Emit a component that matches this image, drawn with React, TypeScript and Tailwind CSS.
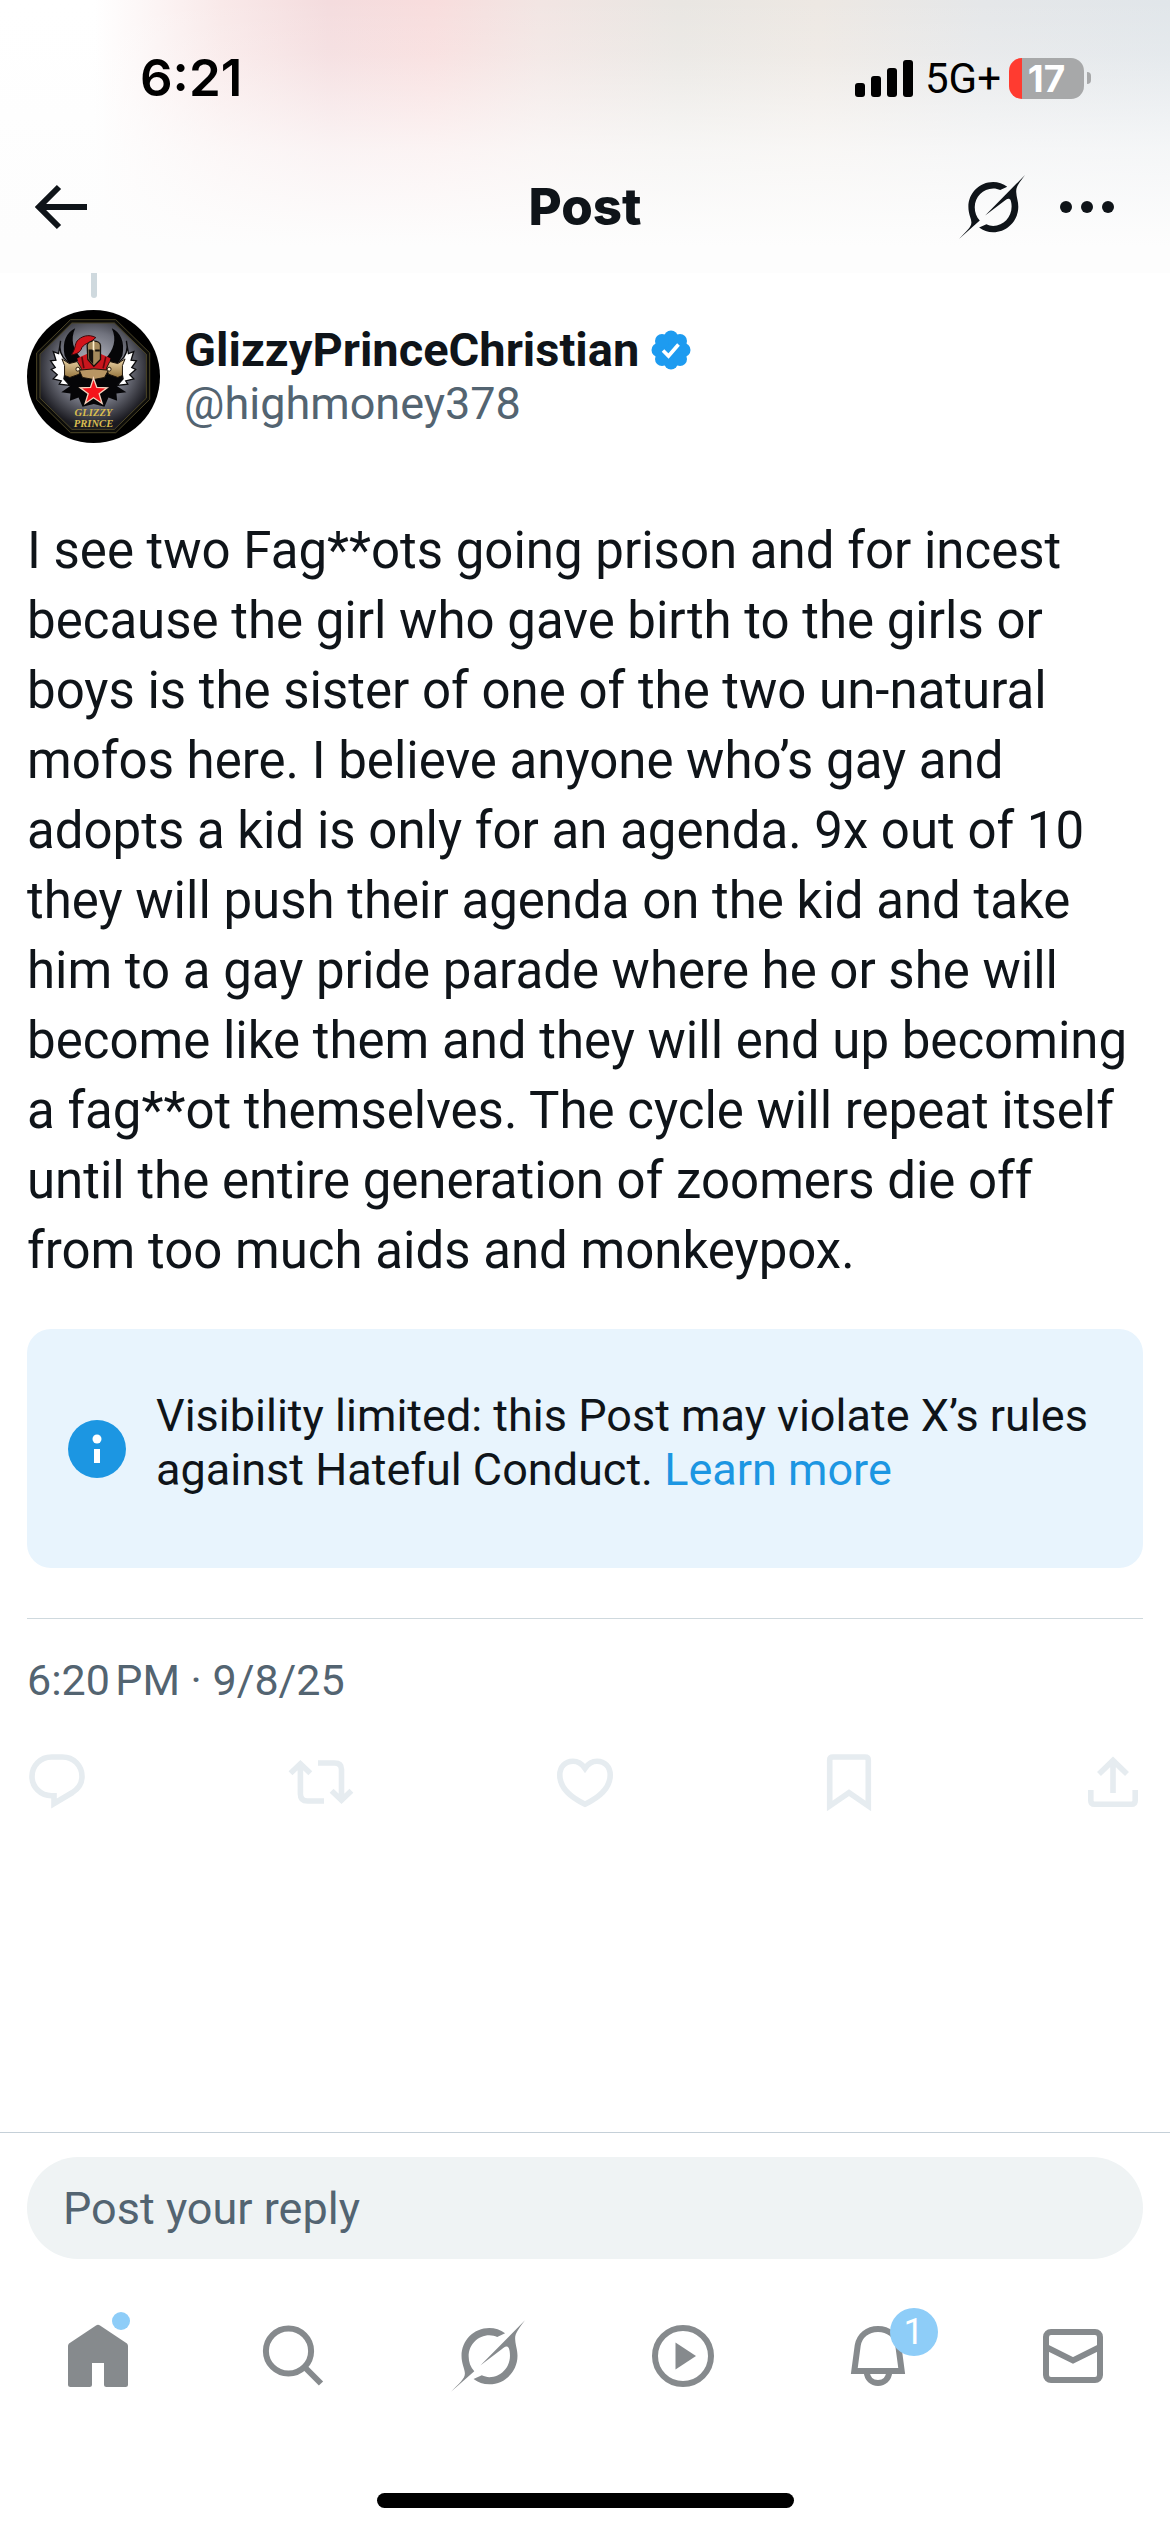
/**
 * Post detail page: status bar, header, post, limited visibility notice, reply bar and tabs
 */

type IconProps = { className?: string };

const postLines = [
  "I see two Fag**ots going prison and for incest",
  "because the girl who gave birth to the girls or",
  "boys is the sister of one of the two un-natural",
  "mofos here. I believe anyone who’s gay and",
  "adopts a kid is only for an agenda. 9x out of 10",
  "they will push their agenda on the kid and take",
  "him to a gay pride parade where he or she will",
  "become like them and they will end up becoming",
  "a fag**ot themselves. The cycle will repeat itself",
  "until the entire generation of zoomers die off",
  "from too much aids and monkeypox.",
];

function SignalIcon({ className }: IconProps) {
  return (
    <svg viewBox="0 0 58 37" className={className} fill="currentColor">
      <rect x="0" y="23" width="10" height="14" rx="3" />
      <rect x="16" y="16" width="10" height="21" rx="3" />
      <rect x="32" y="8" width="10" height="29" rx="3" />
      <rect x="48" y="0" width="10" height="37" rx="3" />
    </svg>
  );
}

function GrokIcon({ className }: IconProps) {
  return (
    <svg viewBox="414 436 197 191" className={className} fill="currentColor">
      <path d="M558 471C546 462 531 457 516 457C475 457 442 490 442 531C442 553 451 566 451 578C451 592 436 604 414 627L476 572C466 561 461 548 461 532C461 501 486 476 516 476C524 476 531 478 537 481Z" />
      <path d="M611 436C592 462 583 472 585 489C586 505 591 514 591 531C591 573 557 607 516 607C500 607 486 602 474 593L496 583C503 586 509 588 516 588C547 588 571 562 571 531C571 523 570 516 568 511C566 506 560 505 555 509L492 557Z" />
    </svg>
  );
}

function VerifiedIcon({ className }: IconProps) {
  return (
    <svg viewBox="0 0 40 40" className={className}>
      <g fill="#1d9bf0">
        <circle cx="20" cy="20" r="15" />
        <circle cx="20" cy="7.500" r="7" />
        <circle cx="20" cy="32.500" r="7" />
        <circle cx="7.500" cy="20" r="7" />
        <circle cx="32.500" cy="20" r="7" />
        <circle cx="11" cy="11" r="7" />
        <circle cx="29" cy="11" r="7" />
        <circle cx="11" cy="29" r="7" />
        <circle cx="29" cy="29" r="7" />
      </g>
      <path d="M12 20.500L17.500 26L27.500 14.500" fill="none" stroke="#fff" strokeWidth="3.600" />
    </svg>
  );
}

function Avatar({ className }: IconProps) {
  return (
    <svg viewBox="21 29 400 400" className={className} role="img" aria-label="Profile picture">
      <defs>
        <radialGradient id="shine" cx="50%" cy="42%" r="56%">
          <stop offset="0%" stopColor="#c4c6d0" />
          <stop offset="60%" stopColor="#70727d" />
          <stop offset="100%" stopColor="#1a1a20" />
        </radialGradient>
        <linearGradient id="gold" x1="0" y1="0" x2="0" y2="1">
          <stop offset="0%" stopColor="#ecd6a9" />
          <stop offset="100%" stopColor="#97763f" />
        </linearGradient>
      </defs>
      <circle cx="221" cy="229" r="200" fill="#000" />
      <path d="M152 58H288L390 158V298L288 398H152L50 298V158Z" fill="#0c0c0a" stroke="#4c4526" strokeWidth="3" />
      <path d="M156 68H284L380 162V294L284 388H156L60 294V162Z" fill="url(#shine)" stroke="#4c4526" strokeWidth="3" />
      {/* dark horns behind the helmet */}
      <path d="M166 84C140 96 126 124 134 166L150 196L186 176C160 150 150 118 166 84Z" fill="#050507" />
      <path d="M276 84C302 96 316 124 308 166L292 196L256 176C282 150 292 118 276 84Z" fill="#050507" />
      {/* dark lower feathers */}
      <path d="M140 200L128 246L150 258L124 276L152 280L150 302L176 292L188 320L222 312L254 320L266 292L292 302L290 280L320 276L292 258L314 246L302 200Z" fill="#050507" />
      {/* white feathers */}
      <g fill="#fff" stroke="#0a0a0c" strokeWidth="4">
        <path d="M122 122C116 148 122 168 142 184L132 236L150 256L118 252L124 242L100 236L112 224L94 208L106 202L92 182L108 180L100 154L116 160Z" />
        <path d="M320 122C326 148 320 168 300 184L310 236L292 256L324 252L318 242L342 236L330 224L348 208L336 202L350 182L334 180L342 154L326 160Z" />
      </g>
      {/* cape and shoulders */}
      <path d="M172 174L204 160H240L272 174L264 208L222 216L180 208Z" fill="#c9161d" />
      <path d="M186 170L192 204M258 170L250 204" stroke="#5e070b" strokeWidth="5" />
      <path d="M134 196L126 176L148 190L172 184L184 204L178 222L150 232L134 226Z" fill="url(#gold)" stroke="#1c130a" strokeWidth="3" />
      <path d="M308 196L316 176L294 190L270 184L260 204L266 222L294 232L308 226Z" fill="url(#gold)" stroke="#1c130a" strokeWidth="3" />
      <path d="M178 210L222 206L266 210L254 232L222 238L188 232Z" fill="#b89563" stroke="#1c130a" strokeWidth="3" />
      <circle cx="174" cy="207" r="6" fill="#fff4d8" stroke="#2b1c0d" strokeWidth="3" />
      <circle cx="268" cy="207" r="6" fill="#fff4d8" stroke="#2b1c0d" strokeWidth="3" />
      {/* plume and helmet */}
      <path d="M228 112C206 100 184 108 172 122C164 132 168 146 154 164C170 162 182 156 186 142C196 128 210 128 216 122Z" fill="#d3151b" stroke="#3a0507" strokeWidth="3" />
      <path d="M202 136C202 118 242 118 242 136V178L222 198L204 178Z" fill="#a58a5c" stroke="#15100a" strokeWidth="4" />
      <path d="M206 148H220V192L208 178ZM226 148H240V154H226Z" fill="#14100c" />
      <path d="M221 122V150" stroke="#fff0cb" strokeWidth="5" />
      {/* star */}
      <path d="M221 234L231 262L262 263L238 281L247 310L221 293L196 310L205 281L181 263L212 262Z" fill="#f5141b" stroke="#f6d3bd" strokeWidth="4" />
      <text x="221" y="348" textAnchor="middle" className="fill-[#d9bd4f] font-['Liberation_Serif'] text-[32px] font-bold italic">
        GLIZZY
      </text>
      <text x="221" y="382" textAnchor="middle" className="fill-[#d9bd4f] font-['Liberation_Serif'] text-[32px] font-bold italic">
        PRINCE
      </text>
    </svg>
  );
}

function ReplyIcon() {
  return <path d="M24.500 6H35.500C46.500 6 55 14.500 55 25.500C55 33 51 38 45.500 41.500L27 52.500V44.700H24.500C13.500 44.700 5 36 5 25.500C5 14.500 13.500 6 24.500 6Z" />;
}

function RepostIcon() {
  return <path d="M-.500 22.300L9.400 12.800L19.300 22.300M9.400 13V43Q9.400 50 16.500 50H33M27 12H43.500Q50.500 12 50.500 18.500V49M40.600 39.700L50.500 49.200L60.400 39.700" />;
}

function LikeIcon() {
  return <path d="M30 17.300C27 13 23 10.300 18 10.300C10 10.300 4.800 16 4.800 24C4.800 35 14 45.500 30 53.200C46 45.500 55.200 35 55.200 24C55.200 16 50 10.300 42 10.300C37 10.300 33 13 30 17.300Z" />;
}

function BookmarkIcon() {
  return <path d="M10.700 55V9Q10.700 6 14 6H46Q49.300 6 49.300 9V55L30 41.700Z" />;
}

function ShareIcon() {
  return <path d="M30 42V10M16 23L30 9.500L44 23M7.800 39V49.500Q7.800 53.300 11.600 53.300H48.400Q52.200 53.300 52.200 49.500V39" />;
}

const actions = [
  { label: "Reply", icon: ReplyIcon },
  { label: "Repost", icon: RepostIcon },
  { label: "Like", icon: LikeIcon },
  { label: "Bookmark", icon: BookmarkIcon },
  { label: "Share", icon: ShareIcon },
];

function HomeTab() {
  return (
    <svg viewBox="0 0 64 64" className="size-16" fill="currentColor">
      <path d="M30 1.600Q32 0 34 1.600L61 19.500Q62 20.500 62 22V60.500Q62 63 59.500 63H40.500Q38 63 38 60.500V39H26V60.500Q26 63 23.500 63H4.500Q2 63 2 60.500V22Q2 20.500 3 19.500Z" />
    </svg>
  );
}

function SearchTab() {
  return (
    <svg viewBox="0 0 64 64" className="size-16" fill="none" stroke="currentColor" strokeWidth="6">
      <circle cx="27.500" cy="27" r="22.600" />
      <path d="M44 43.500L60 59.500" />
    </svg>
  );
}

function VideoTab() {
  return (
    <svg viewBox="0 0 64 64" className="size-16" fill="none" stroke="currentColor" strokeWidth="6">
      <circle cx="32" cy="32" r="28" />
      <path d="M24.500 18.500V45.500L45 32Z" fill="currentColor" stroke="none" />
    </svg>
  );
}

function AlertsTab() {
  return (
    <svg viewBox="0 0 64 64" className="size-16" fill="none" stroke="currentColor" strokeWidth="6">
      <path d="M8.300 47L11.700 21.500C13.300 11.500 21.500 5 32 5C42.500 5 50.700 11.500 52.300 21.500L55.700 47Z" />
      <path d="M20.700 48C21.300 55 26 59 32 59C38 59 42.700 55 43.300 48" />
    </svg>
  );
}

function MailTab() {
  return (
    <svg viewBox="0 0 64 64" className="size-16" fill="none" stroke="currentColor" strokeWidth="6">
      <rect x="5" y="8" width="54" height="48" rx="5" />
      <path d="M5 23L32 36.500L59 23" />
    </svg>
  );
}

export default function App() {
  return (
    <div className="flex min-h-screen flex-col bg-white font-[Roboto,sans-serif] text-[#0f1419]">
      <header className="bg-[linear-gradient(to_bottom,rgba(253,253,253,0)_0%,rgba(253,253,253,0.15)_20%,rgba(253,253,253,0.7)_55%,#fdfdfd_90%),linear-gradient(to_right,#ffffff_8%,#f9e9e9_19%,#f4dcde_28%,#f8dddd_37%,#f2e5e3_46%,#e9e6e2_58%,#ede8e3_70%,#e5e7e9_84%,#e1e6ea_100%)] pb-[15px]">
        <div className="flex h-[156px] items-center justify-between pr-[79px] pl-[140px] font-[Inter,sans-serif] text-black">
          <span className="text-[51px] font-semibold">6:21</span>
          <div className="flex items-center">
            <SignalIcon className="h-[37px] w-[58px]" />
            <span className="ml-3 font-[Roboto,sans-serif] text-[42px]">5G+</span>
            <div className="ml-2 flex h-[41px] w-[75px] items-center justify-center rounded-[13px] bg-[linear-gradient(to_right,#ff3b30_13px,#a7a8a9_13px)] text-[37px] leading-none font-bold text-white">
              17
            </div>
            <div className="ml-[3px] h-3 w-1 rounded-r-full bg-[#a7a8a9]" />
          </div>
        </div>
        <nav className="grid h-[102px] grid-cols-3 items-center pr-[54px] pl-8">
          <button aria-label="Back" className="justify-self-start">
            <svg viewBox="0 0 58 50" className="h-[50px] w-[58px]" fill="none" stroke="currentColor" strokeWidth="6">
              <path d="M55 25H7M27 5L7 25L27 45" />
            </svg>
          </button>
          <h1 className="pl-[22px] text-center font-[Inter,sans-serif] text-[51px] leading-[60px] font-extrabold">Post</h1>
          <div className="flex items-center justify-end gap-[35px]">
            <button aria-label="Grok">
              <GrokIcon className="h-16 w-[66px]" />
            </button>
            <button aria-label="More">
              <svg viewBox="0 0 56 12" className="h-3 w-14" fill="currentColor">
                <circle cx="6" cy="6" r="6" />
                <circle cx="27" cy="6" r="6" />
                <circle cx="48" cy="6" r="6" />
              </svg>
            </button>
          </div>
        </nav>
      </header>

      <main className="flex-1 px-[27px]">
        <article>
          {/* thread line from the post above */}
          <div className="ml-16 h-[25px] w-[6px] rounded-b-full bg-[#cfd9de]" />
          <div className="mt-3 flex items-center gap-6">
            <Avatar className="size-[133px]" />
            <div className="text-[45px] leading-[54px]">
              <div className="flex items-center gap-3">
                <span className="text-[47px] font-bold">GlizzyPrinceChristian</span>
                <VerifiedIcon className="size-10" />
              </div>
              <div className="text-[#536471]">@highmoney378</div>
            </div>
          </div>

          <p className="mt-[73px] text-[51px] leading-[70px] whitespace-pre">{postLines.join("\n")}</p>

          <div className="mt-[43px] flex items-center gap-[30px] rounded-[24px] bg-[#e8f4fd] px-[41px] py-[60px]">
            <svg viewBox="0 0 58 58" className="size-[58px] shrink-0">
              <circle cx="29" cy="29" r="29" fill="#1c96e2" />
              <circle cx="29" cy="19" r="4.500" fill="#fff" />
              <path d="M29 29V43" stroke="#fff" strokeWidth="6" />
            </svg>
            <p className="pb-[11px] text-[45px] leading-[54px]">
              Visibility limited: this Post may violate X’s rules
              <br />
              against Hateful Conduct.{" "}
              <a href="#rules" className="text-[#1c96e2]">
                Learn more
              </a>
            </p>
          </div>

          <div className="mt-[50px] border-t border-[#cfd9de] pt-9 text-[43px] leading-[50px] text-[#536471]">
            6:20{"\u202f"}PM · 9/8/25
          </div>

          <div className="mt-[46px] flex justify-between text-[#e6ecf0]">
            {actions.map((action) => {
              const Icon = action.icon;
              return (
                <button key={action.label} aria-label={action.label}>
                  <svg viewBox="0 0 60 60" className="size-[60px] overflow-visible" fill="none" stroke="currentColor" strokeWidth="5.600">
                    <Icon />
                  </svg>
                </button>
              );
            })}
          </div>
        </article>
      </main>

      <footer className="border-t border-[#c5d0d8] pt-6">
        <div className="px-[27px]">
          <input
            type="text"
            aria-label="Post your reply"
            placeholder="Post your reply"
            className="block h-[102px] w-full rounded-full bg-[#eff3f4] px-9 text-[45px] placeholder:text-[#536471]"
          />
        </div>
        <nav className="mt-[61px] grid grid-cols-6 items-center justify-items-center text-[#868a8d]">
          <button aria-label="Home" className="relative">
            <HomeTab />
            <span className="absolute -top-3 right-0 size-[18px] rounded-full bg-[#8ecdf8]" />
          </button>
          <button aria-label="Search">
            <SearchTab />
          </button>
          <button aria-label="Grok">
            <GrokIcon className="h-[72px] w-[74px]" />
          </button>
          <button aria-label="Videos">
            <VideoTab />
          </button>
          <button aria-label="Notifications" className="relative">
            <AlertsTab />
            <span className="absolute -top-4 left-11 flex size-12 items-center justify-center rounded-full bg-[#8ecdf8] text-[36px] leading-none text-white">
              1
            </span>
          </button>
          <button aria-label="Messages">
            <MailTab />
          </button>
        </nav>
        <div className="mx-auto mt-[101px] mb-6 h-[15px] w-[417px] rounded-full bg-black" />
      </footer>
    </div>
  );
}
